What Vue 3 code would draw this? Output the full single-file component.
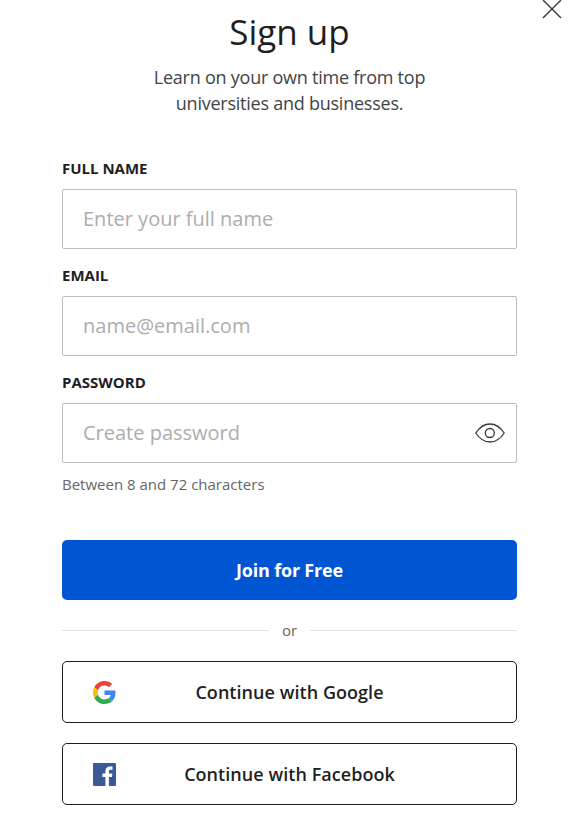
<template>
  <main class="signup">
    <button class="close-btn" type="button" aria-label="Close">
      <svg viewBox="0 0 20 20" width="20" height="20" fill="none">
        <path d="M1 0L19 18M19 0L1 18" stroke="#373a3c" stroke-width="1.4" />
      </svg>
    </button>

    <header class="signup-header">
      <h1 class="title">Sign up</h1>
      <p class="subtitle">Learn on your own time from top universities and businesses.</p>
    </header>

    <form class="signup-form" @submit.prevent>
      <div v-for="field in fields" :key="field.id" class="field">
        <label class="field-label" :for="field.id">{{ field.label }}</label>
        <div class="field-box">
          <input
            :id="field.id"
            v-model="form[field.id]"
            class="field-input"
            :type="inputType(field)"
            :placeholder="field.placeholder"
          />
          <button
            v-if="field.type === 'password'"
            class="eye-btn"
            type="button"
            aria-label="Show password"
            @click="showPassword = !showPassword"
          >
            <svg viewBox="0 0 30 20" width="30" height="20" fill="none" stroke="#373a3c" stroke-width="1.3">
              <path d="M0.8 10C4.6 4.2 9.4 1 15 1C20.6 1 25.4 4.2 29.2 10C25.4 15.8 20.6 19 15 19C9.4 19 4.6 15.8 0.8 10Z" />
              <circle cx="14.8" cy="10" r="4.5" />
            </svg>
          </button>
        </div>
      </div>
      <p class="hint">Between 8 and 72 characters</p>

      <button class="join-btn" type="submit">Join for Free</button>
    </form>

    <div class="divider"><span>or</span></div>

    <div class="social">
      <button class="social-btn" type="button">
        <svg class="social-icon" viewBox="0 0 48 48" width="23" height="23">
          <path fill="#ea4335" d="M24 9.5c3.54 0 6.71 1.22 9.21 3.6l6.85-6.85C35.9 2.38 30.47 0 24 0 14.62 0 6.51 5.38 2.56 13.22l7.98 6.19C12.43 13.72 17.74 9.5 24 9.5z" />
          <path fill="#4285f4" d="M46.98 24.55c0-1.57-.15-3.09-.38-4.55H24v9.02h12.94c-.58 2.96-2.26 5.48-4.78 7.18l7.73 6c4.51-4.18 7.09-10.36 7.09-17.65z" />
          <path fill="#fbbc05" d="M10.53 28.59c-.48-1.45-.76-2.99-.76-4.59s.27-3.14.76-4.59l-7.98-6.19C.92 16.46 0 20.12 0 24c0 3.88.92 7.54 2.56 10.78l7.97-6.19z" />
          <path fill="#34a853" d="M24 48c6.48 0 11.93-2.13 15.89-5.81l-7.73-6c-2.15 1.45-4.92 2.3-8.16 2.3-6.26 0-11.57-4.22-13.47-9.91l-7.98 6.19C6.51 42.62 14.62 48 24 48z" />
        </svg>
        <span class="social-text">Continue with Google</span>
      </button>
      <button class="social-btn" type="button">
        <svg class="social-icon" viewBox="0 0 23 23" width="23" height="23">
          <rect width="23" height="23" rx="1.2" fill="#3b5998" />
          <path fill="#fff" d="M12.4 23V14.1H9.4V10.6H12.4V8C12.4 5.1 14.2 3.5 16.9 3.5C18.1 3.5 19.2 3.6 19.5 3.65V6.8H17.6C16.2 6.8 15.9 7.5 15.9 8.5V10.6H19.4L18.9 14.1H15.9V23Z" />
        </svg>
        <span class="social-text">Continue with Facebook</span>
      </button>
    </div>
  </main>
</template>

<script setup>
import { reactive, ref } from 'vue'

const fields = [
  { id: 'name', label: 'FULL NAME', type: 'text', placeholder: 'Enter your full name' },
  { id: 'email', label: 'EMAIL', type: 'email', placeholder: 'name@email.com' },
  { id: 'password', label: 'PASSWORD', type: 'password', placeholder: 'Create password' }
]

const form = reactive({ name: '', email: '', password: '' })
const showPassword = ref(false)

const inputType = (field) => {
  if (field.type === 'password' && showPassword.value) return 'text'
  return field.type
}
</script>

<style>
body {
  background: #ffffff;
}
</style>

<style scoped>
.signup {
  position: relative;
  box-sizing: border-box;
  width: 580px;
  height: 821px;
  padding: 8px 63px 0 62px;
  overflow: hidden;
  font-family: 'Open Sans', sans-serif;
  color: #1f1f1f;
}

button {
  font-family: inherit;
  cursor: pointer;
}

.close-btn {
  position: absolute;
  top: 0;
  right: 18px;
  padding: 0;
  border: none;
  background: none;
}

.close-btn svg,
.eye-btn svg {
  display: block;
}

.signup-header {
  text-align: center;
}

.title {
  margin: 0;
  font-size: 35px;
  font-weight: 400;
  line-height: 48px;
}

.subtitle {
  width: 300px;
  margin: 8px auto 40px;
  font-size: 18px;
  font-weight: 400;
  line-height: 26px;
  letter-spacing: -0.24px;
  color: #414446;
}

.field {
  margin-bottom: 14px;
}

.field-label {
  display: block;
  margin-bottom: 9px;
  font-size: 15px;
  font-weight: 700;
  line-height: 24px;
}

.field-box {
  display: flex;
  align-items: center;
  box-sizing: border-box;
  height: 60px;
  padding: 0 11px 0 20px;
  border: 1px solid #bdbdbd;
  border-radius: 2px;
}

.field-input {
  flex: 1;
  min-width: 0;
  padding: 0 0 2px;
  border: none;
  outline: none;
  background: none;
  font-family: inherit;
  font-size: 20px;
  color: #1f1f1f;
}

.field-input::placeholder {
  color: #adadad;
  opacity: 1;
}

.eye-btn {
  padding: 0;
  border: none;
  background: none;
}

.hint {
  margin: -5px 0 44px;
  font-size: 15px;
  line-height: 24px;
  color: #666666;
}

.join-btn {
  display: block;
  width: 100%;
  height: 60px;
  padding: 0;
  border: none;
  border-radius: 5px;
  background: #0056d2;
  color: #ffffff;
  font-size: 18px;
  font-weight: 700;
  letter-spacing: -0.2px;
}

.divider {
  display: flex;
  align-items: center;
  gap: 13px;
  height: 61px;
  font-size: 15px;
  color: #666666;
}

.divider span {
  padding-bottom: 2px;
}

.divider::before,
.divider::after {
  content: '';
  flex: 1;
  height: 1px;
  background: #e1e1e1;
}

.social {
  display: grid;
  gap: 20px;
}

.social-btn {
  display: grid;
  grid-template-columns: 23px 1fr 23px;
  align-items: center;
  height: 62px;
  padding: 0 30px;
  border: 1px solid #1f1f1f;
  border-radius: 5px;
  background: #ffffff;
  color: #1f1f1f;
  font-size: 18px;
  font-weight: 600;
  letter-spacing: 0.05px;
}
</style>
